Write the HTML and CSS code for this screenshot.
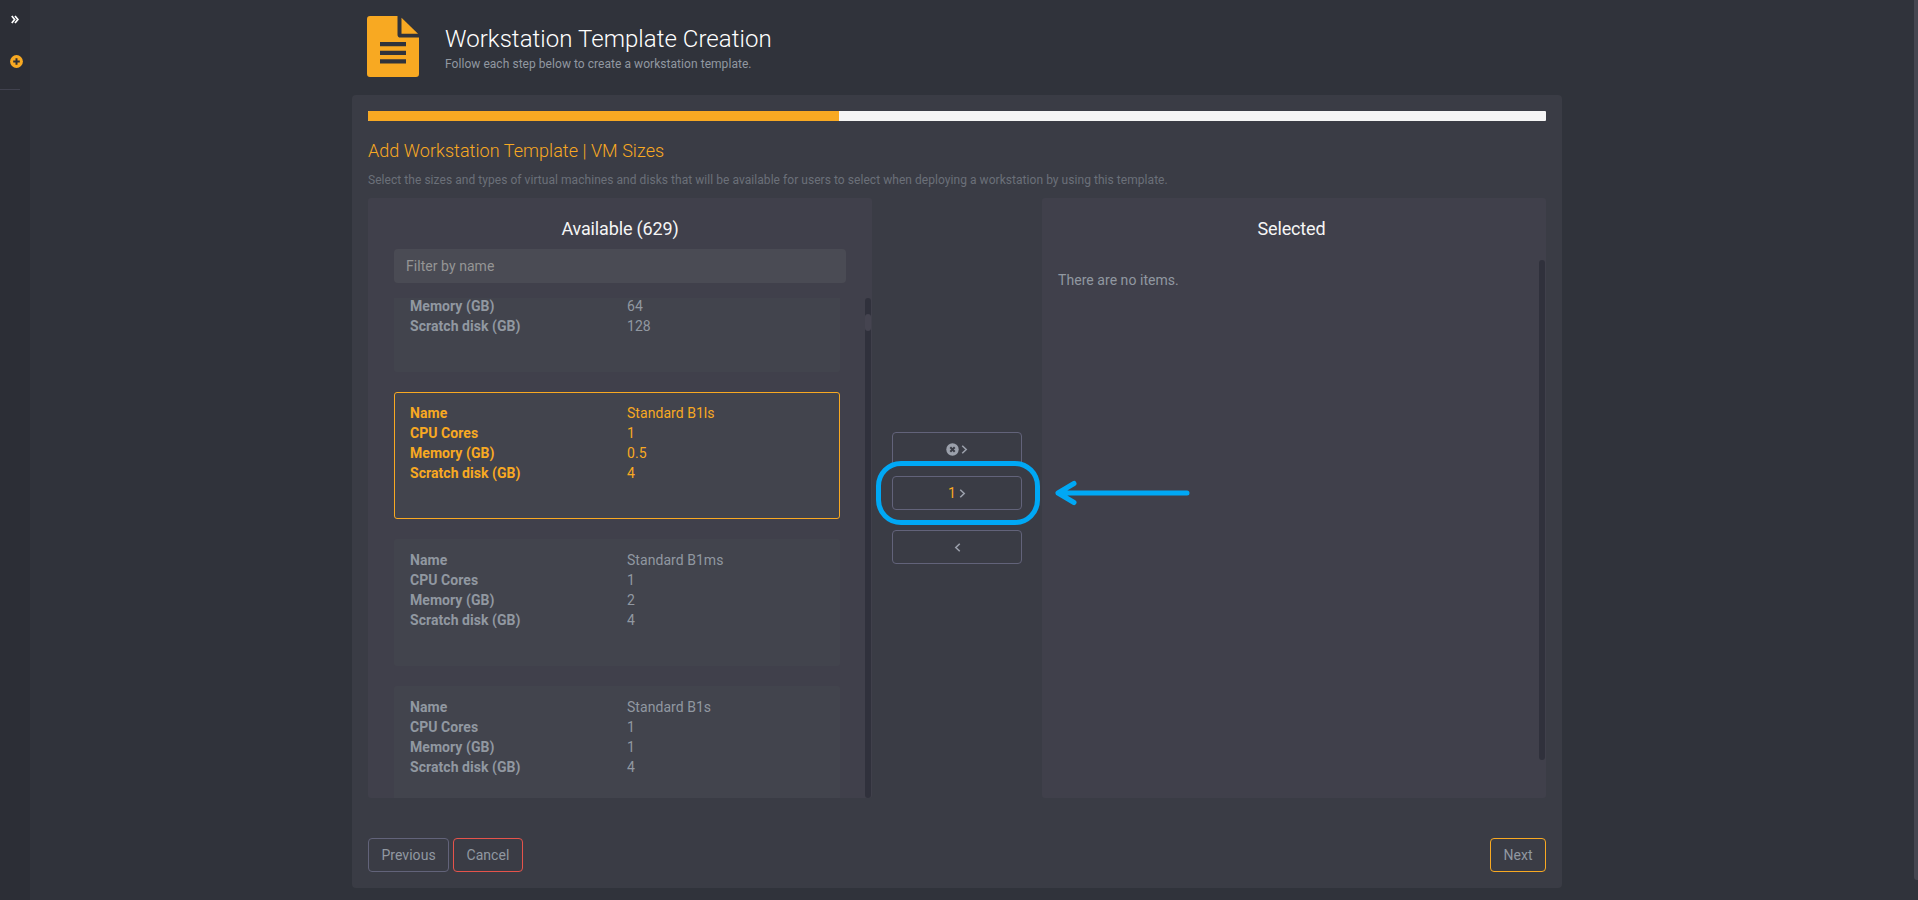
FILE: index.html
```
<!DOCTYPE html>
<html lang="en">

<head>
    <meta charset="utf-8">
    <title>Workstation Template Creation</title>
    <link rel="stylesheet" href="styles.css">
</head>

<body>
    <aside class="sidebar">
        <svg class="expand-icon" viewBox="0 0 8 9">
            <path d="M.8 1 L3.6 4.5 L.8 8 M4 1 L6.9 4.5 L4 8" />
        </svg>
        <svg class="add-icon" viewBox="0 0 13 13">
            <circle cx="6.5" cy="6.5" r="6.4" />
            <path d="M6.5 3.2v6.6M3.2 6.5h6.6" />
        </svg>
        <hr>
    </aside>

    <main class="content">
        <header class="page-header">
            <svg class="file-icon" viewBox="0 0 52 61">
                <path fill-rule="evenodd" d="M3 0H30.5V18.500A3 3 0 0 0 33.500 21.600H52V58a3 3 0 0 1-3 3H3a3 3 0 0 1-3-3V3a3 3 0 0 1 3-3ZM13 26v4.200h26V26ZM13 34.800V39h26v-4.200ZM13 43.300v4.200h26v-4.200Z" />
                <path d="M34.500 1.700V17.700H51Z" />
            </svg>
            <div>
                <h1>Workstation Template Creation</h1>
                <p>Follow each step below to create a workstation template.</p>
            </div>
        </header>

        <section class="wizard">
            <div class="progress">
                <div class="progress-bar" style="width: 40%"></div>
            </div>
            <h2>Add Workstation Template | VM Sizes</h2>
            <p class="description">Select the sizes and types of virtual machines and disks that will be available for users to select when deploying a workstation by using this template.</p>

            <div class="picker">
                <div class="panel available">
                    <h3>Available (629)</h3>
                    <input class="filter" type="text" placeholder="Filter by name">
                    <div class="list-row">
                        <div class="list">
                            <dl class="card first">
                                <dt>Memory (GB)</dt><dd>64</dd>
                                <dt>Scratch disk (GB)</dt><dd>128</dd>
                            </dl>
                            <dl class="card active">
                                <dt>Name</dt><dd>Standard B1ls</dd>
                                <dt>CPU Cores</dt><dd>1</dd>
                                <dt>Memory (GB)</dt><dd>0.5</dd>
                                <dt>Scratch disk (GB)</dt><dd>4</dd>
                            </dl>
                            <dl class="card">
                                <dt>Name</dt><dd>Standard B1ms</dd>
                                <dt>CPU Cores</dt><dd>1</dd>
                                <dt>Memory (GB)</dt><dd>2</dd>
                                <dt>Scratch disk (GB)</dt><dd>4</dd>
                            </dl>
                            <dl class="card">
                                <dt>Name</dt><dd>Standard B1s</dd>
                                <dt>CPU Cores</dt><dd>1</dd>
                                <dt>Memory (GB)</dt><dd>1</dd>
                                <dt>Scratch disk (GB)</dt><dd>4</dd>
                            </dl>
                        </div>
                        <div class="scrollbar">
                            <div class="thumb"></div>
                        </div>
                    </div>
                </div>

                <div class="actions">
                    <button class="btn">
                        <svg class="clear-icon" viewBox="0 0 13 13">
                            <circle cx="6.5" cy="6.5" r="6.2" />
                            <path d="M4.300 4.300l4.400 4.400M8.700 4.300l-4.400 4.400" />
                        </svg>
                        <svg class="chevron" viewBox="0 0 6 8"><path d="M1 .7L4.500 4L1 7.300" /></svg>
                    </button>
                    <button class="btn add-selected">
                        <span class="count">1</span>
                        <svg class="chevron" viewBox="0 0 6 8"><path d="M1 .7L4.500 4L1 7.300" /></svg>
                        <span class="highlight"></span>
                        <svg class="arrow" viewBox="0 0 136 26">
                            <path d="M132 13H3M19 3.500L3 13L19 22.500" />
                        </svg>
                    </button>
                    <button class="btn">
                        <svg class="chevron" viewBox="0 0 6 8"><path d="M5 .7L1.500 4L5 7.300" /></svg>
                    </button>
                </div>

                <div class="panel selected">
                    <h3>Selected</h3>
                    <div class="list-row">
                        <p class="empty">There are no items.</p>
                        <div class="scrollbar"></div>
                    </div>
                </div>
            </div>

            <footer class="footer">
                <button class="btn">Previous</button>
                <button class="btn cancel">Cancel</button>
                <button class="btn next">Next</button>
            </footer>
        </section>
    </main>

    <div class="page-scroll"></div>
</body>

</html>
```
FILE: styles.css
```
* {
    box-sizing: border-box;
}

body {
    display: flex;
    height: 900px;
    margin: 0;
    overflow: hidden;
    background: #30333b;
    color: #9198a1;
    font: 14px/20px Roboto, "Liberation Sans", sans-serif;
    letter-spacing: 0.05px;
}

h1,
h2,
h3,
p,
dl,
dd {
    margin: 0;
}

/* Sidebar */
.sidebar {
    display: flex;
    flex-direction: column;
    width: 30px;
    padding-top: 15px;
    background: #2c2e36;
}

.expand-icon {
    width: 8px;
    height: 9px;
    margin-left: 11px;
    fill: none;
    stroke: #fff;
    stroke-width: 1.7;
}

.add-icon {
    width: 13px;
    height: 13px;
    margin: 31px 0 0 10px;
    fill: #f8a922;
    stroke: #2c2e36;
    stroke-width: 2;
}

.add-icon circle,
.clear-icon circle {
    stroke: none;
}

.sidebar hr {
    width: 20px;
    height: 1px;
    margin: 21px 0 0;
    border: 0;
    background: #41424f;
}

/* Header */
.content {
    width: 1210px;
    margin-left: 322px;
}

.page-header {
    display: flex;
    height: 95px;
    padding: 16px 0 0 15px;
}

.file-icon {
    width: 52px;
    height: 61px;
    margin-right: 26px;
    fill: #f8a922;
}

.page-header h1 {
    margin-top: 9px;
    color: #fff;
    font-size: 24px;
    font-weight: 300;
    line-height: 28px;
}

.page-header p {
    font-size: 12px;
    line-height: 22px;
}

/* Wizard */
.wizard {
    height: 793px;
    padding: 16px;
    border-radius: 4px;
    background: #3a3c45;
}

.progress {
    height: 10px;
    overflow: hidden;
    border-radius: 1px;
    background: #f5f5f5;
}

.progress-bar {
    height: 10px;
    background: #f8a922;
}

h2 {
    margin-top: 19px;
    color: #f8a922;
    font-size: 18px;
    font-weight: 300;
    line-height: 22px;
}

.description {
    margin-top: 8px;
    color: #6b7079;
    font-size: 12px;
}

.picker {
    display: flex;
    height: 600px;
    margin-top: 8px;
}

.panel {
    display: flex;
    flex-direction: column;
    width: 504px;
    border-radius: 3px;
    background: #40404b;
}

.panel h3 {
    margin-top: 20px;
    color: #f5f5f5;
    font-size: 18px;
    font-weight: 400;
    line-height: 22px;
    letter-spacing: -0.15px;
    text-align: center;
}

.selected h3 {
    padding-right: 5px;
}

.filter {
    height: 34px;
    margin: 9px 26px 15px;
    padding: 0 12px;
    border: 0;
    border-radius: 4px;
    background: #4a4b54;
    font: inherit;
    letter-spacing: inherit;
}

.filter::placeholder {
    color: #959595;
}

.list-row {
    display: flex;
    flex: 1;
    min-height: 0;
}

.list {
    width: 446px;
    margin: 0 25px 0 26px;
    overflow: hidden;
}

.card {
    display: grid;
    grid-template-columns: 217px 1fr;
    grid-auto-rows: 20px;
    height: 127px;
    margin-bottom: 20px;
    padding: 10px 15px;
    border: 1px solid transparent;
    border-radius: 3px;
    background: #42444d;
}

/* scrolled past its first two rows */
.card.first {
    height: 76px;
    margin-top: -2px;
    padding-top: 0;
    border-top: 0;
}

.card.active {
    border-color: #f8a922;
    color: #f8a922;
}

dt {
    font-weight: 700;
}

.scrollbar {
    width: 6px;
    padding-top: 16px;
    border-radius: 3px;
    background: #30313c;
}

.thumb {
    height: 17px;
    border-radius: 3px;
    background: #454450;
}

/* Buttons */
.btn {
    display: flex;
    justify-content: center;
    align-items: center;
    height: 34px;
    padding: 0 12.4px;
    border: 1px solid #62637a;
    border-radius: 4px;
    background: none;
    color: #9198a1;
    font: inherit;
    letter-spacing: inherit;
}

.actions {
    width: 170px;
    padding: 234px 20px 0;
}

.actions .btn {
    width: 130px;
    margin-bottom: 10px;
}

.actions .add-selected {
    position: relative;
    margin-bottom: 20px;
}

.clear-icon {
    width: 13px;
    height: 13px;
    margin-right: 2px;
    fill: #9ba0ab;
    stroke: #3a3c45;
    stroke-width: 2;
}

.chevron {
    width: 7px;
    height: 9px;
    fill: none;
    stroke: #9ba0ab;
    stroke-width: 1.4;
}

.count {
    margin-right: 3px;
    color: #f8a922;
}

/* Callout around the button that moves the selection */
.highlight {
    position: absolute;
    top: -16px;
    left: -17px;
    width: 164px;
    height: 64px;
    border: 5px solid #00a8f5;
    border-radius: 25px;
}

.arrow {
    position: absolute;
    top: 3px;
    left: 162px;
    width: 136px;
    height: 26px;
    fill: none;
    stroke: #00a8f5;
    stroke-width: 5;
    stroke-linecap: round;
    stroke-linejoin: round;
}

.selected .list-row {
    flex: none;
    height: 500px;
    margin-top: 20px;
}

.empty {
    width: 497px;
    padding: 10px 16px;
}

.footer {
    display: flex;
    gap: 4px;
    margin-top: 40px;
}

.cancel {
    border-color: #e5534b;
}

.next {
    margin-left: auto;
    border-color: #f8a922;
}

.page-scroll {
    width: 4px;
    height: 880px;
    margin-left: auto;
    border-radius: 0 0 0 3px;
    background: #454650;
}
```
